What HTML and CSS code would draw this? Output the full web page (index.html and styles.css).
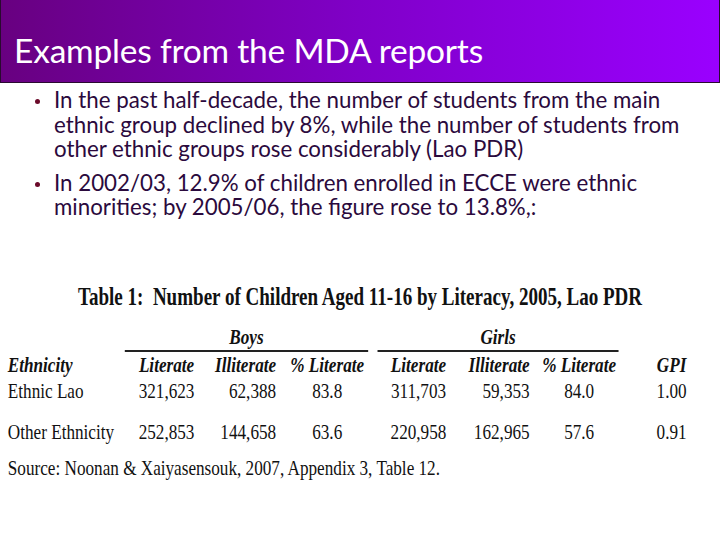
FILE: index.html
```html
<!DOCTYPE html>
<html lang="en">
<head>
<meta charset="utf-8">
<title>Examples from the MDA reports</title>
<link rel="stylesheet" href="styles.css">
</head>
<body>
<div class="slide">
  <header class="banner">
    <h1 class="title">Examples from the MDA reports</h1>
  </header>
  <ul class="bullets">
    <li>In the past half-decade, the number of students from the main ethnic group declined by 8%, while the number of students from other ethnic groups rose considerably (Lao PDR)</li>
    <li>In 2002/03, 12.9% of children enrolled in ECCE were ethnic minorities; by 2005/06, the figure rose to 13.8%,:</li>
  </ul>
  <div class="figure">
    <div class="scaled">
      <div class="tcaption">Table 1:&nbsp; Number of Children Aged 11-16 by Literacy, 2005, Lao PDR</div>
      <div class="grid">
        <div class="cell"></div>
        <div class="group g-boys">Boys</div>
        <div class="group g-girls">Girls</div>
        <div class="cell"></div>

        <div class="cell hd left">Ethnicity</div>
        <div class="cell hd c">Literate</div>
        <div class="cell hd r">Illiterate</div>
        <div class="cell hd c">% Literate</div>
        <div class="cell hd c">Literate</div>
        <div class="cell hd r">Illiterate</div>
        <div class="cell hd c">% Literate</div>
        <div class="cell hd c">GPI</div>

        <div class="cell left">Ethnic Lao</div>
        <div class="cell c">321,623</div>
        <div class="cell r">62,388</div>
        <div class="cell c">83.8</div>
        <div class="cell c">311,703</div>
        <div class="cell r">59,353</div>
        <div class="cell c">84.0</div>
        <div class="cell c">1.00</div>

        <div class="cell left row2">Other Ethnicity</div>
        <div class="cell c row2">252,853</div>
        <div class="cell r row2">144,658</div>
        <div class="cell c row2">63.6</div>
        <div class="cell c row2">220,958</div>
        <div class="cell r row2">162,965</div>
        <div class="cell c row2">57.6</div>
        <div class="cell c row2">0.91</div>
      </div>
      <div class="source">Source: Noonan &amp; Xaiyasensouk, 2007, Appendix 3, Table 12.</div>
    </div>
  </div>
</div>
</body>
</html>
```
FILE: styles.css
```css
html, body {
  margin: 0;
  padding: 0;
  background: #ffffff;
}
.slide {
  width: 720px;
  height: 540px;
  overflow: hidden;
  position: relative;
  background: #ffffff;
}
.banner {
  height: 82px;
  border: 1px solid #2a0a30;
  border-top: none;
  background: linear-gradient(to right, #680080 0%, #8000c8 50%, #9a00ff 100%);
  display: flex;
  align-items: flex-end;
  box-sizing: content-box;
}
.title {
  margin: 0 0 13px 13px;
  font-family: Lato, "Open Sans", sans-serif;
  font-weight: normal;
  font-size: 33.5px;
  line-height: 38px;
  color: #ffffff;
  letter-spacing: -0.2px;
}
.bullets {
  list-style: none;
  margin: 5px 0 0 0;
  padding: 0 0 0 54px;
  width: 640px;
  font-family: Lato, "Open Sans", sans-serif;
  font-size: 22.3px;
  line-height: 24.5px;
  color: #2b0a3d;
}
.bullets li {
  position: relative;
  margin-bottom: 9px;
}
.bullets li::before {
  content: "";
  position: absolute;
  left: -19px;
  top: 11px;
  width: 5px;
  height: 5px;
  border-radius: 50%;
  background: #6b0a2a;
}
.figure {
  margin-top: 62px;
}
.scaled {
  width: 923px;
  transform: scaleX(0.78);
  transform-origin: 0 0;
  font-family: "Liberation Serif", "Times New Roman", serif;
  color: #111111;
}
.tcaption {
  font-weight: bold;
  font-size: 24.4px;
  line-height: 30px;
  padding-left: 100px;
}
.grid {
  margin-top: 13px;
  display: grid;
  grid-template-columns: 154px 99px 96px 121px 113px 91px 117px 120px;
  font-size: 22px;
  padding-left: 10px;
}
.group {
  grid-column: span 3;
  font-style: italic;
  font-weight: bold;
  text-align: center;
  line-height: 24px;
  border-bottom: 2px solid #222;
  padding-bottom: 1px;
}
.g-boys {
  margin: 0 8px 0 -4px;
}
.g-girls {
  margin: 0 8px 0 4px;
}
.cell {
  line-height: 26px;
  white-space: nowrap;
}
.hd {
  font-style: italic;
  font-weight: bold;
  padding-top: 0;
}
.left { text-align: left; }
.c { text-align: center; }
.r { text-align: right; padding-right: 5px; }
.row2 {
  padding-top: 15px;
}
.source {
  margin-top: 10px;
  font-size: 22px;
  line-height: 26px;
  padding-left: 10px;
}
```
